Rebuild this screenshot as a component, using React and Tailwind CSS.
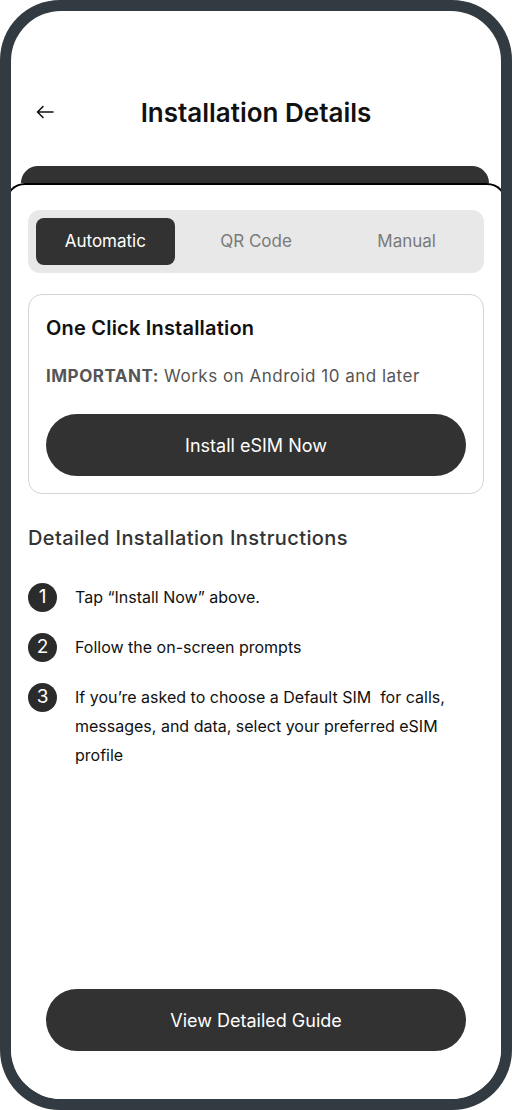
import React from "react";

const tabs = ["Automatic", "QR Code", "Manual"];

const steps = [
  "Tap \u201cInstall Now\u201d above.",
  "Follow the on-screen prompts",
  "If you\u2019re asked to choose a Default SIM\u00a0 for calls, messages, and data, select your preferred eSIM profile",
];

const BackArrow = () => (
  <svg width="18" height="14" viewBox="0 0 18 14" fill="none">
    <path
      d="M17 7H1.5M7 1.5L1.5 7L7 12.5"
      stroke="#111"
      strokeWidth="1.6"
      strokeLinecap="round"
      strokeLinejoin="round"
    />
  </svg>
);

export default function App() {
  return (
    <div
      className="w-[512px] h-[1110px] bg-white"
      style={{ fontFamily: "Inter, 'Liberation Sans', sans-serif" }}
    >
      <div className="w-full h-full rounded-[60px] bg-[#323b41] p-[11px]">
        <div className="h-full rounded-[50px] bg-white overflow-hidden flex flex-col">
          {/* Header */}
          <div className="relative mt-[77px] h-[48px] flex items-center justify-center">
            <button className="absolute left-[25px] top-1/2 -translate-y-1/2">
              <BackArrow />
            </button>
            <h1 className="text-[26px] font-semibold text-[#111]">
              Installation Details
            </h1>
          </div>

          {/* Dark bar behind sheet */}
          <div className="mt-[30px] ml-[10px] mr-[12px] h-[17px] rounded-t-[18px] bg-[#323232]" />

          {/* Sheet */}
          <div className="-mx-[6px] flex-1 flex flex-col rounded-t-[20px] border-2 border-b-0 border-black bg-white px-[21px] pt-[25px]">
            {/* Tabs */}
            <div className="grid grid-cols-3 gap-[12px] rounded-[12px] bg-[#e8e8e8] p-[8px] h-[63px]">
              {tabs.map((t, i) => (
                <div
                  key={t}
                  className={
                    i === 0
                      ? "flex items-center justify-center rounded-[8px] bg-[#323232] text-white text-[17px]"
                      : "flex items-center justify-center text-[#7a7a7a] text-[17px]"
                  }
                >
                  {t}
                </div>
              ))}
            </div>

            {/* One click card */}
            <div className="mt-[21px] rounded-[14px] border border-[#d4d4d4] px-[17px] pt-[21px] pb-[17px]">
              <h2 className="text-[20px] leading-[24px] font-semibold text-[#111] tracking-[0.2px]">
                One Click Installation
              </h2>
              <p className="mt-[24px] text-[17px] leading-[24px] text-[#555] tracking-[0.5px]">
                <span className="font-bold">IMPORTANT:</span> Works on Android 10 and later
              </p>
              <button className="mt-[26px] w-full h-[62px] rounded-full bg-[#323232] text-white text-[18px]">
                Install eSIM Now
              </button>
            </div>

            {/* Instructions */}
            <h3 className="mt-[30px] text-[20px] leading-[28px] font-medium text-[#333] tracking-[0.4px]">
              Detailed Installation Instructions
            </h3>
            <ol className="mt-[31px] flex flex-col gap-[21px]">
              {steps.map((s, i) => (
                <li key={i} className="flex items-start gap-[18px]">
                  <span className="w-[29px] h-[29px] shrink-0 rounded-full bg-[#2b2b2b] text-white text-[19px] flex items-center justify-center">
                    {i + 1}
                  </span>
                  <p className="text-[16px] leading-[29px] text-[#111] pr-[30px]">
                    {s}
                  </p>
                </li>
              ))}
            </ol>

            {/* Bottom button */}
            <div className="mt-auto pb-[48px] px-[18px]">
              <button className="w-full h-[62px] rounded-full bg-[#323232] text-white text-[18px]">
                View Detailed Guide
              </button>
            </div>
          </div>
        </div>
      </div>
    </div>
  );
}
